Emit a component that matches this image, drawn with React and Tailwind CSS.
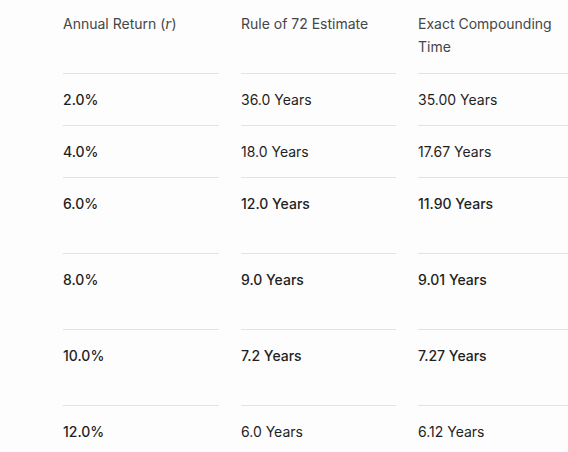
import React from "react";

const rows = [
  { rate: "2.0%", est: "36.0 Years", exact: "35.00 Years", tall: false },
  { rate: "4.0%", est: "18.0 Years", exact: "17.67 Years", tall: false },
  { rate: "6.0%", est: "12.0 Years", exact: "11.90 Years", tall: true },
  { rate: "8.0%", est: "9.0 Years", exact: "9.01 Years", tall: true },
  { rate: "10.0%", est: "7.2 Years", exact: "7.27 Years", tall: true },
  { rate: "12.0%", est: "6.0 Years", exact: "6.12 Years", tall: false, last: true },
];

function Cell({ children, className = "" }) {
  return <div className={"border-b border-[#e3e3e3] " + className}>{children}</div>;
}

export default function App() {
  return (
    <div
      className="w-[568px] h-[452px] overflow-hidden bg-[#fdfdfd] text-[14px] leading-[23px]"
      style={{ fontFamily: "Inter, 'Noto Sans', sans-serif" }}
    >
      <div className="grid grid-cols-[156px_155px_156px] gap-x-[22px] pl-[63px]">
        <Cell className="pt-[12px] pb-[15px] text-[#444746]">
          Annual Return (<span className="italic" style={{ fontFamily: "'Liberation Serif', serif", fontSize: "16px" }}>r</span>)
        </Cell>
        <Cell className="pt-[12px] pb-[15px] text-[#444746]">Rule of 72 Estimate</Cell>
        <Cell className="pt-[12px] pb-[15px] text-[#444746]">Exact Compounding Time</Cell>

        {rows.map((r) => {
          const pad = r.tall ? "pt-[14px] pb-[38px]" : "pt-[14px] pb-[14px]";
          const border = r.last ? " border-b-0" : "";
          const w = r.tall ? "font-medium" : "font-normal";
          return (
            <React.Fragment key={r.rate}>
              <Cell className={pad + border + " font-medium text-[#1f1f1f]"}>{r.rate}</Cell>
              <Cell className={pad + border + " text-[#1f1f1f] " + w}>{r.est}</Cell>
              <Cell className={pad + border + " text-[#1f1f1f] " + w}>{r.exact}</Cell>
            </React.Fragment>
          );
        })}
      </div>
    </div>
  );
}
